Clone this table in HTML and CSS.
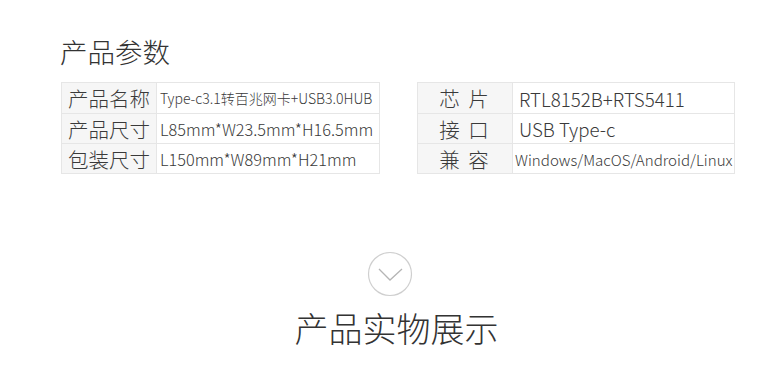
FILE: index.html
```html
<!DOCTYPE html>
<html lang="zh-CN">
<head>
  <meta charset="UTF-8">
  <title>产品参数</title>
  <link rel="stylesheet" href="styles.css">
</head>
<body>

  <section class="params">
    <h2 class="title">产品参数</h2>

    <div class="tables">
      <div class="spec">
        <div class="key">产品名称</div>
        <div class="val small">Type-c3.1转百兆网卡+USB3.0HUB</div>
        <div class="key">产品尺寸</div>
        <div class="val">L85mm*W23.5mm*H16.5mm</div>
        <div class="key">包装尺寸</div>
        <div class="val">L150mm*W89mm*H21mm</div>
      </div>

      <div class="spec right">
        <div class="key spaced">芯 片</div>
        <div class="val big">RTL8152B+RTS5411</div>
        <div class="key spaced">接 口</div>
        <div class="val big">USB Type-c</div>
        <div class="key spaced">兼 容</div>
        <div class="val tight">Windows/MacOS/Android/Linux</div>
      </div>
    </div>
  </section>

  <section class="show">
    <svg class="arrow" width="46" height="46" viewBox="0 0 46 46">
      <circle cx="23" cy="23" r="21.5" fill="none" stroke="#cfcfcf" stroke-width="1.2"/>
      <polyline points="12,18 23,29 35,18" fill="none" stroke="#b5b5b5" stroke-width="1.3"/>
    </svg>
    <h2 class="show-title">产品实物展示</h2>
  </section>

</body>
</html>
```

FILE: styles.css
```css
body {
  margin: 0;
  background: #fff;
  color: #333;
  font-family: "Noto Sans CJK SC", "Noto Sans", sans-serif;
  width: 771px;
  height: 390px;
  overflow: hidden;
}

.params {
  padding: 31px 0 0 60px;
}

.title {
  margin: 0;
  font-size: 27.5px;
  font-weight: 300;
  line-height: 40px;
  color: #333;
}

.tables {
  display: flex;
  gap: 37px;
  margin-top: 11px;
  padding-left: 1px;
}

.spec {
  display: grid;
  grid-template-columns: 95px 223px;
  grid-template-rows: 31px 30px 30px;
  border-top: 1px solid #e6e6e6;
  border-left: 1px solid #e6e6e6;
}

.spec.right {
  grid-template-columns: 95px 222px;
}

.key,
.val {
  border-right: 1px solid #e6e6e6;
  border-bottom: 1px solid #e6e6e6;
  display: flex;
  align-items: center;
  white-space: nowrap;
}

.key {
  background: #f6f6f6;
  justify-content: center;
  font-size: 20.5px;
  font-weight: 300;
  color: #3a3a3a;
}

.key.spaced {
  letter-spacing: 2px;
}

.val {
  padding-left: 3px;
  font-size: 16.3px;
  font-weight: 300;
  color: #3a3a3a;
  overflow: hidden;
}

.val.small {
  font-size: 14px;
}

.val.big {
  padding-left: 6px;
  font-size: 18.7px;
}

.val.tight {
  padding-left: 2px;
  font-size: 15.1px;
}

.show {
  display: flex;
  flex-direction: column;
  align-items: center;
  margin-top: 77px;
  padding-left: 22px;
}

.arrow {
  display: block;
  margin-left: -14px;
}

.show-title {
  margin: 7px 0 0;
  font-size: 34px;
  font-weight: 300;
  line-height: 48px;
  color: #333;
}
```
